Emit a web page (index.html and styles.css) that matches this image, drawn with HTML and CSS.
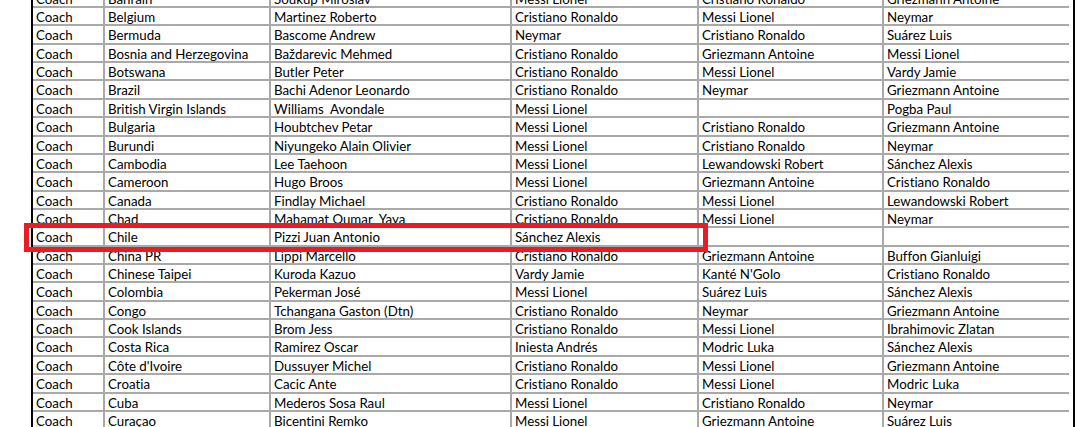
FILE: index.html
```html
<!DOCTYPE html>
<html lang="en">
<head>
<meta charset="utf-8">
<title>Coach votes</title>
<link rel="stylesheet" href="styles.css">
</head>
<body>
<div class="sheet">
  <div class="row"><div class="cell">Coach</div><div class="cell">Bahrain</div><div class="cell">Soukup Miroslav</div><div class="cell">Messi Lionel</div><div class="cell">Cristiano Ronaldo</div><div class="cell">Griezmann Antoine</div></div>
  <div class="row"><div class="cell">Coach</div><div class="cell">Belgium</div><div class="cell">Martinez Roberto</div><div class="cell">Cristiano Ronaldo</div><div class="cell">Messi Lionel</div><div class="cell">Neymar</div></div>
  <div class="row"><div class="cell">Coach</div><div class="cell">Bermuda</div><div class="cell">Bascome Andrew</div><div class="cell">Neymar</div><div class="cell">Cristiano Ronaldo</div><div class="cell">Suárez Luis</div></div>
  <div class="row"><div class="cell">Coach</div><div class="cell">Bosnia and Herzegovina</div><div class="cell">Baždarevic Mehmed</div><div class="cell">Cristiano Ronaldo</div><div class="cell">Griezmann Antoine</div><div class="cell">Messi Lionel</div></div>
  <div class="row"><div class="cell">Coach</div><div class="cell">Botswana</div><div class="cell">Butler Peter</div><div class="cell">Cristiano Ronaldo</div><div class="cell">Messi Lionel</div><div class="cell">Vardy Jamie</div></div>
  <div class="row"><div class="cell">Coach</div><div class="cell">Brazil</div><div class="cell">Bachi Adenor Leonardo</div><div class="cell">Cristiano Ronaldo</div><div class="cell">Neymar</div><div class="cell">Griezmann Antoine</div></div>
  <div class="row"><div class="cell">Coach</div><div class="cell">British Virgin Islands</div><div class="cell">Williams  Avondale</div><div class="cell">Messi Lionel</div><div class="cell"></div><div class="cell">Pogba Paul</div></div>
  <div class="row"><div class="cell">Coach</div><div class="cell">Bulgaria</div><div class="cell">Houbtchev Petar</div><div class="cell">Messi Lionel</div><div class="cell">Cristiano Ronaldo</div><div class="cell">Griezmann Antoine</div></div>
  <div class="row"><div class="cell">Coach</div><div class="cell">Burundi</div><div class="cell">Niyungeko Alain Olivier</div><div class="cell">Messi Lionel</div><div class="cell">Cristiano Ronaldo</div><div class="cell">Neymar</div></div>
  <div class="row"><div class="cell">Coach</div><div class="cell">Cambodia</div><div class="cell">Lee Taehoon</div><div class="cell">Messi Lionel</div><div class="cell">Lewandowski Robert</div><div class="cell">Sánchez Alexis</div></div>
  <div class="row"><div class="cell">Coach</div><div class="cell">Cameroon</div><div class="cell">Hugo Broos</div><div class="cell">Messi Lionel</div><div class="cell">Griezmann Antoine</div><div class="cell">Cristiano Ronaldo</div></div>
  <div class="row"><div class="cell">Coach</div><div class="cell">Canada</div><div class="cell">Findlay Michael</div><div class="cell">Cristiano Ronaldo</div><div class="cell">Messi Lionel</div><div class="cell">Lewandowski Robert</div></div>
  <div class="row"><div class="cell">Coach</div><div class="cell">Chad</div><div class="cell">Mahamat Oumar  Yaya</div><div class="cell">Cristiano Ronaldo</div><div class="cell">Messi Lionel</div><div class="cell">Neymar</div></div>
  <div class="row row-highlight"><div class="cell">Coach</div><div class="cell">Chile</div><div class="cell">Pizzi Juan Antonio</div><div class="cell">Sánchez Alexis</div><div class="cell"></div><div class="cell"></div></div>
  <div class="row"><div class="cell">Coach</div><div class="cell">China PR</div><div class="cell">Lippi Marcello</div><div class="cell">Cristiano Ronaldo</div><div class="cell">Griezmann Antoine</div><div class="cell">Buffon Gianluigi</div></div>
  <div class="row"><div class="cell">Coach</div><div class="cell">Chinese Taipei</div><div class="cell">Kuroda Kazuo</div><div class="cell">Vardy Jamie</div><div class="cell">Kanté N'Golo</div><div class="cell">Cristiano Ronaldo</div></div>
  <div class="row"><div class="cell">Coach</div><div class="cell">Colombia</div><div class="cell">Pekerman José</div><div class="cell">Messi Lionel</div><div class="cell">Suárez Luis</div><div class="cell">Sánchez Alexis</div></div>
  <div class="row"><div class="cell">Coach</div><div class="cell">Congo</div><div class="cell">Tchangana Gaston (Dtn)</div><div class="cell">Cristiano Ronaldo</div><div class="cell">Neymar</div><div class="cell">Griezmann Antoine</div></div>
  <div class="row"><div class="cell">Coach</div><div class="cell">Cook Islands</div><div class="cell">Brom Jess</div><div class="cell">Cristiano Ronaldo</div><div class="cell">Messi Lionel</div><div class="cell">Ibrahimovic Zlatan</div></div>
  <div class="row"><div class="cell">Coach</div><div class="cell">Costa Rica</div><div class="cell">Ramirez Oscar</div><div class="cell">Iniesta Andrés</div><div class="cell">Modric Luka</div><div class="cell">Sánchez Alexis</div></div>
  <div class="row"><div class="cell">Coach</div><div class="cell">Côte d'Ivoire</div><div class="cell">Dussuyer Michel</div><div class="cell">Cristiano Ronaldo</div><div class="cell">Messi Lionel</div><div class="cell">Griezmann Antoine</div></div>
  <div class="row"><div class="cell">Coach</div><div class="cell">Croatia</div><div class="cell">Cacic Ante</div><div class="cell">Cristiano Ronaldo</div><div class="cell">Messi Lionel</div><div class="cell">Modric Luka</div></div>
  <div class="row"><div class="cell">Coach</div><div class="cell">Cuba</div><div class="cell">Mederos Sosa Raul</div><div class="cell">Messi Lionel</div><div class="cell">Cristiano Ronaldo</div><div class="cell">Neymar</div></div>
  <div class="row"><div class="cell">Coach</div><div class="cell">Curaçao</div><div class="cell">Bicentini Remko</div><div class="cell">Messi Lionel</div><div class="cell">Griezmann Antoine</div><div class="cell">Suárez Luis</div></div>
</div>
</body>
</html>
```

FILE: styles.css
```css
html, body {
  margin: 0;
  padding: 0;
  background: #ffffff;
  overflow: hidden;
}

.sheet {
  margin: -10.36px 0 0 31px;
  width: 1040px;
  border-left: 2px solid #000;
  border-right: 2px solid #000;
  font-family: "Lato", "Liberation Sans", sans-serif;
  font-size: 13.3px;
  font-variant-ligatures: none;
  color: #000;
}

.row {
  display: grid;
  grid-template-columns: 72px 166px 241px 187px 185px 185px;
  height: 18.36px;
}

.cell {
  box-sizing: border-box;
  height: 18.36px;
  padding: 1px 3px 0;
  line-height: 17.5px;
  border-bottom: 2px solid #a9a9a9;
  border-right: 2px solid #a9a9a9;
  white-space: pre;
  overflow: hidden;
}

.cell:last-child {
  border-right: none;
}

.row-highlight {
  position: relative;
}

.row-highlight::after {
  content: "";
  position: absolute;
  left: -9px;
  top: -5.3px;
  width: 684px;
  height: 29px;
  box-sizing: border-box;
  border: 5px solid #ec1b23;
}
```
